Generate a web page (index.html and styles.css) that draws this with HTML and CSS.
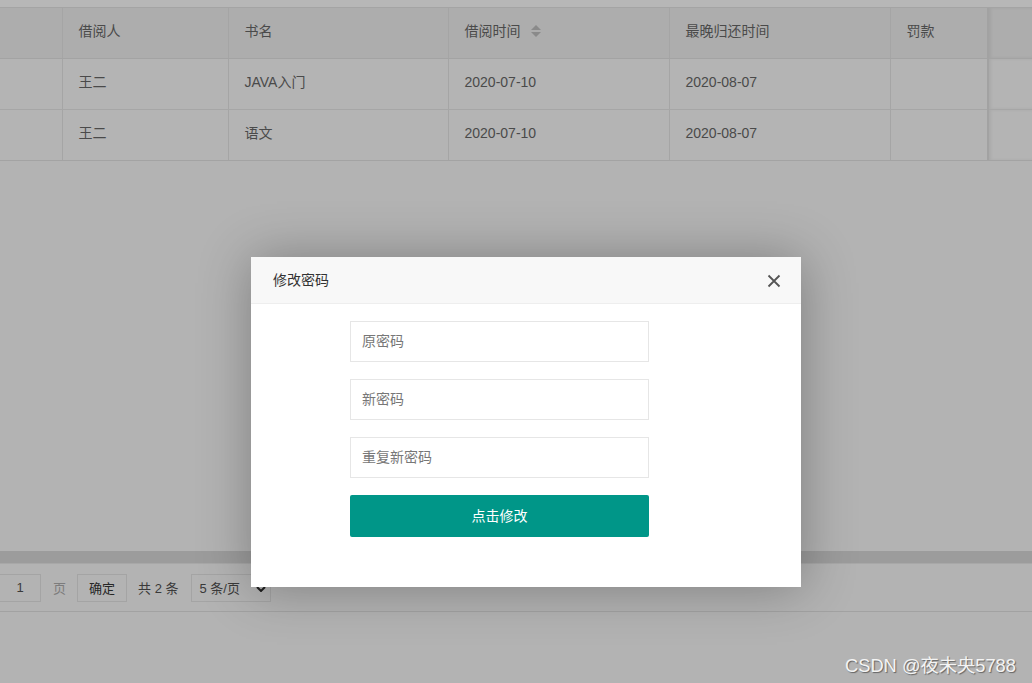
FILE: index.html
```html
<!DOCTYPE html>
<html lang="zh-CN">
<head>
<meta charset="utf-8">
<title>修改密码</title>
<link rel="stylesheet" href="styles.css">
</head>
<body>
<div class="page">
  <div class="topband"></div>
  <div class="table-wrap">
    <table class="grid">
      <colgroup>
        <col class="c0"><col class="c1"><col class="c2"><col class="c3"><col class="c4"><col class="c5"><col class="c6">
      </colgroup>
      <thead>
        <tr>
          <th></th>
          <th>借阅人</th>
          <th>书名</th>
          <th><span class="sortable">借阅时间<span class="sort"><i class="up"></i><i class="down"></i></span></span></th>
          <th>最晚归还时间</th>
          <th>罚款</th>
          <th class="fixed"></th>
        </tr>
      </thead>
      <tbody>
        <tr>
          <td></td><td>王二</td><td>JAVA入门</td><td>2020-07-10</td><td>2020-08-07</td><td></td><td class="fixed"></td>
        </tr>
        <tr>
          <td></td><td>王二</td><td>语文</td><td>2020-07-10</td><td>2020-08-07</td><td></td><td class="fixed"></td>
        </tr>
      </tbody>
    </table>
  </div>
  <div class="spacer"></div>
  <div class="scrollbar"></div>
  <div class="pager">
    <span class="skip-input">1</span>
    <span class="pg-label">页</span>
    <span class="pg-btn">确定</span>
    <span class="pg-count">共 2 条</span>
    <span class="pg-select">5 条/页<svg class="caret" viewBox="0 0 10 6" width="10" height="6"><path d="M1 1 L5 5 L9 1" fill="none" stroke="#1e1e1e" stroke-width="2"/></svg></span>
  </div>
  <div class="bottom"></div>
</div>

<div class="layer">
  <div class="layer-title">
    <span class="title-text">修改密码</span>
    <svg class="close" viewBox="0 0 14 14" width="14" height="14"><path d="M1.5 1.5 L12.5 12.5 M12.5 1.5 L1.5 12.5" stroke="#555" stroke-width="1.8" fill="none"/></svg>
  </div>
  <div class="layer-body">
    <div class="field">原密码</div>
    <div class="field">新密码</div>
    <div class="field">重复新密码</div>
    <div class="submit">点击修改</div>
  </div>
</div>

<div class="watermark">CSDN @夜未央5788</div>
</body>
</html>
```

FILE: styles.css
```css
html, body {
  margin: 0;
  padding: 0;
}
body {
  width: 1032px;
  height: 683px;
  overflow: hidden;
  background: #b3b3b3;
  font-family: "Liberation Sans", "Noto Sans CJK SC", sans-serif;
  font-size: 14px;
  color: #4a4a4a;
  position: relative;
}
.page {
  display: flex;
  flex-direction: column;
  height: 683px;
}
.topband {
  height: 7px;
  background: #b7b7b7;
  border-bottom: 1px solid #a4a4a4;
}
.table-wrap {
  border-bottom: 1px solid #a3a3a3;
}
.grid {
  border-collapse: collapse;
  table-layout: fixed;
  width: 1032px;
}
.c0 { width: 62px; }
.c1 { width: 166px; }
.c2 { width: 220px; }
.c3 { width: 221px; }
.c4 { width: 221px; }
.c5 { width: 98px; }
.c6 { width: 44px; }
.grid th, .grid td {
  text-align: left;
  font-weight: normal;
  padding: 0 16px 4px;
  line-height: 20px;
  border-left: 1px solid #a5a5a5;
  white-space: nowrap;
}
.grid th:first-child, .grid td:first-child {
  border-left: none;
}
.grid th {
  height: 46px;
  background: #adadad;
  border-bottom: 1px solid #a3a3a3;
}
.grid td {
  height: 46px;
  background: #b4b4b4;
  border-bottom: 1px solid #a6a6a6;
}
.grid tbody tr:last-child td {
  border-bottom: none;
}
.grid .fixed {
  border-left: 2px solid #a2a2a2;
  box-shadow: inset 2px 0 3px rgba(0,0,0,0.06);
}
.sortable {
  display: inline-flex;
  align-items: center;
}
.sort {
  display: inline-flex;
  flex-direction: column;
  gap: 2px;
  margin-left: 10px;
}
.sort i {
  display: block;
  width: 0;
  height: 0;
  border-left: 5px solid transparent;
  border-right: 5px solid transparent;
}
.sort .up { border-bottom: 5px solid #8a8a8a; }
.sort .down { border-top: 5px solid #8a8a8a; }
.spacer {
  height: 390px;
}
.scrollbar {
  height: 12px;
  background: #9c9c9c;
  border-bottom: 1px solid #a8a8a8;
}
.pager {
  height: 47px;
  display: flex;
  align-items: center;
  border-bottom: 1px solid #a2a2a2;
  background: #b3b3b3;
  color: #3a3a3a;
  font-size: 13px;
}
.skip-input {
  width: 40px;
  height: 26px;
  border: 1px solid #a4a4a4;
  border-left: none;
  display: flex;
  align-items: center;
  justify-content: center;
}
.pg-label {
  margin-left: 12px;
  color: #7c7c7c;
}
.pg-btn {
  margin-left: 11px;
  width: 48px;
  height: 26px;
  border: 1px solid #a4a4a4;
  display: flex;
  align-items: center;
  justify-content: center;
  color: #262626;
}
.pg-count {
  margin-left: 11px;
}
.pg-select {
  margin-left: 13px;
  width: 71px;
  height: 26px;
  border: 1px solid #a4a4a4;
  padding-left: 7px;
  display: flex;
  align-items: center;
  position: relative;
}
.caret {
  position: absolute;
  right: 4px;
  top: 11px;
}
.bottom {
  flex: 1;
  background: #b3b3b3;
}
.layer {
  position: absolute;
  left: 251px;
  top: 257px;
  width: 550px;
  height: 330px;
  background: #fff;
  box-shadow: 1px 1px 50px rgba(0,0,0,0.3);
  display: flex;
  flex-direction: column;
}
.layer-title {
  height: 46px;
  background: #f8f8f8;
  border-bottom: 1px solid #eee;
  display: flex;
  align-items: center;
  justify-content: space-between;
  padding: 0 20px 0 22px;
  color: #333;
  font-family: "Noto Sans CJK SC", sans-serif;
  font-size: 14px;
}
.title-text {
  margin-top: -3px;
}
.close {
  margin-top: 1px;
}
.layer-body {
  padding: 17px 0 0 99px;
  display: flex;
  flex-direction: column;
  gap: 17px;
}
.field {
  width: 286px;
  height: 36px;
  padding-bottom: 3px;
  border: 1px solid #e6e6e6;
  padding-left: 11px;
  display: flex;
  align-items: center;
  color: #777;
  font-family: "Noto Sans CJK SC", sans-serif;
  font-size: 14px;
}
.submit {
  width: 299px;
  height: 40px;
  padding-bottom: 2px;
  background: #009688;
  border-radius: 2px;
  color: #fff;
  display: flex;
  align-items: center;
  justify-content: center;
  font-family: "Noto Sans CJK SC", sans-serif;
  font-size: 14px;
}
.watermark {
  position: absolute;
  left: 845px;
  top: 651px;
  color: #f4f4f4;
  font-size: 18.3px;
  font-family: "Liberation Sans", "Noto Sans CJK SC", sans-serif;
  text-shadow: 1px 1px 1px rgba(0,0,0,0.45);
  white-space: nowrap;
}
```
